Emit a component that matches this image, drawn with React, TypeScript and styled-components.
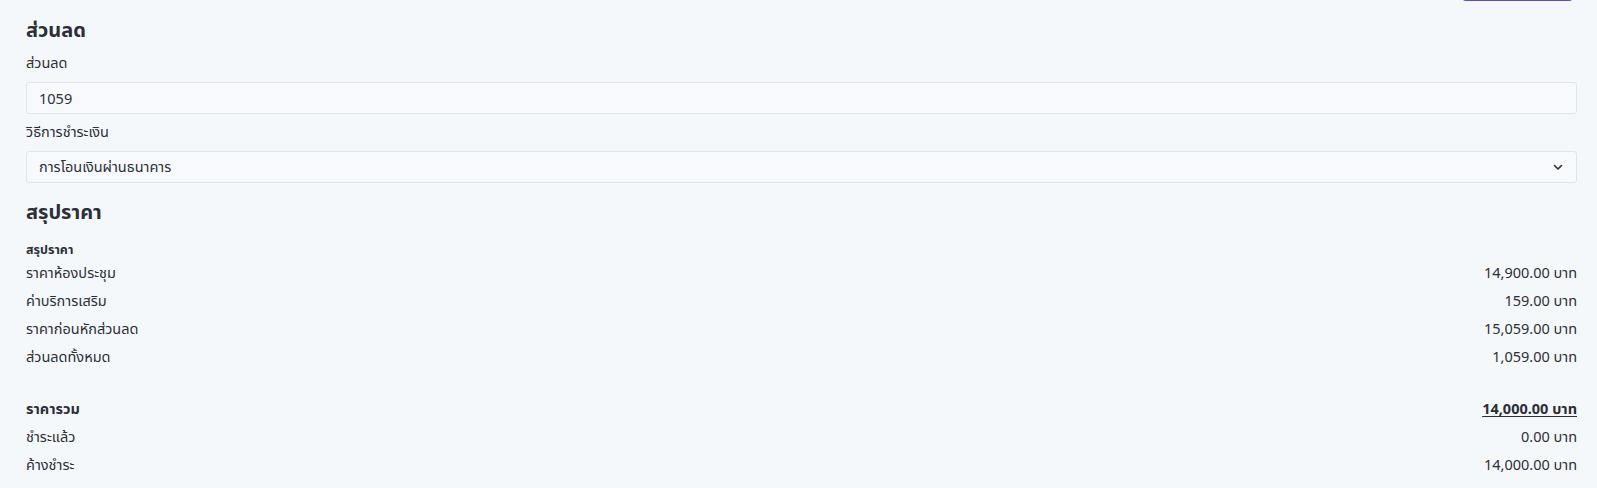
import React from "react";
import styled, { createGlobalStyle } from "styled-components";

const Global = createGlobalStyle`
  html, body { margin: 0; padding: 0; background: #f5f8fb; }
  body { font-family: "Noto Sans", "Noto Sans Thai", sans-serif; color: #2b2f36; }
  * { box-sizing: border-box; }
`;

const Page = styled.div`
  padding: 0 20px 0 26px;
  position: relative;
  min-height: 488px;
`;

const TopButtonEdge = styled.div`
  position: absolute;
  top: -30px;
  right: 24px;
  width: 111px;
  height: 31px;
  border-radius: 4px;
  background: #5a4fc7;
`;

const Section = styled.section<{ $top: number }>`
  display: flex;
  flex-direction: column;
  padding-top: ${(p) => p.$top}px;
`;

const Heading = styled.h2<{ $after: number }>`
  margin: 0 0 ${(p) => p.$after}px;
  font-size: 20px;
  font-weight: 700;
  line-height: 28px;
  color: #2b2f36;
`;

const Label = styled.label`
  display: block;
  font-size: 14.5px;
  line-height: 20px;
  margin-bottom: 10px;
  color: #2b2f36;
`;

const Field = styled.div`
  display: flex;
  align-items: center;
  justify-content: space-between;
  height: 32px;
  padding: 0 12px;
  margin-bottom: 7px;
  border: 1px solid #e1e5ea;
  border-radius: 3px;
  background: #f7f9fc;
  font-size: 14.5px;
  color: #2b2f36;
`;

const SubLabel = styled.div`
  font-size: 12.5px;
  font-weight: 700;
  line-height: 18px;
`;

const Group = styled.div`
  display: flex;
  flex-direction: column;
  & + & {
    margin-top: 24px;
  }
`;

const Row = styled.div<{ $bold?: boolean }>`
  display: flex;
  justify-content: space-between;
  align-items: center;
  height: 28px;
  font-size: 14.5px;
  font-weight: ${(p) => (p.$bold ? 700 : 400)};
`;

const Amount = styled.span<{ $underline?: boolean }>`
  text-decoration: ${(p) => (p.$underline ? "underline" : "none")};
  text-underline-offset: 2px;
`;

const Chevron = () => (
  <svg width="12" height="12" viewBox="0 0 24 24" fill="none" stroke="#2b2f36" strokeWidth="3.2" strokeLinecap="round" strokeLinejoin="round">
    <path d="M5 9l7 7 7-7" />
  </svg>
);

const rows = [
  ["ราคาห้องประชุม", "14,900.00 บาท"],
  ["ค่าบริการเสริม", "159.00 บาท"],
  ["ราคาก่อนหักส่วนลด", "15,059.00 บาท"],
  ["ส่วนลดทั้งหมด", "1,059.00 บาท"],
];

export default function App() {
  return (
    <>
      <Global />
      <Page>
        <TopButtonEdge />
        <Section $top={16}>
          <Heading $after={8}>ส่วนลด</Heading>
          <Label>ส่วนลด</Label>
          <Field>1059</Field>
          <Label>วิธีการชำระเงิน</Label>
          <Field>
            <span>การโอนเงินผ่านธนาคาร</span>
            <Chevron />
          </Field>
        </Section>
        <Section $top={8}>
          <Heading $after={15}>สรุปราคา</Heading>
          <SubLabel>สรุปราคา</SubLabel>
          <Group>
            {rows.map(([l, v]) => (
              <Row key={l}>
                <span>{l}</span>
                <Amount>{v}</Amount>
              </Row>
            ))}
          </Group>
          <Group>
            <Row $bold>
              <span>ราคารวม</span>
              <Amount $underline>14,000.00 บาท</Amount>
            </Row>
            <Row>
              <span>ชำระแล้ว</span>
              <Amount>0.00 บาท</Amount>
            </Row>
            <Row>
              <span>ค้างชำระ</span>
              <Amount>14,000.00 บาท</Amount>
            </Row>
          </Group>
        </Section>
      </Page>
    </>
  );
}
